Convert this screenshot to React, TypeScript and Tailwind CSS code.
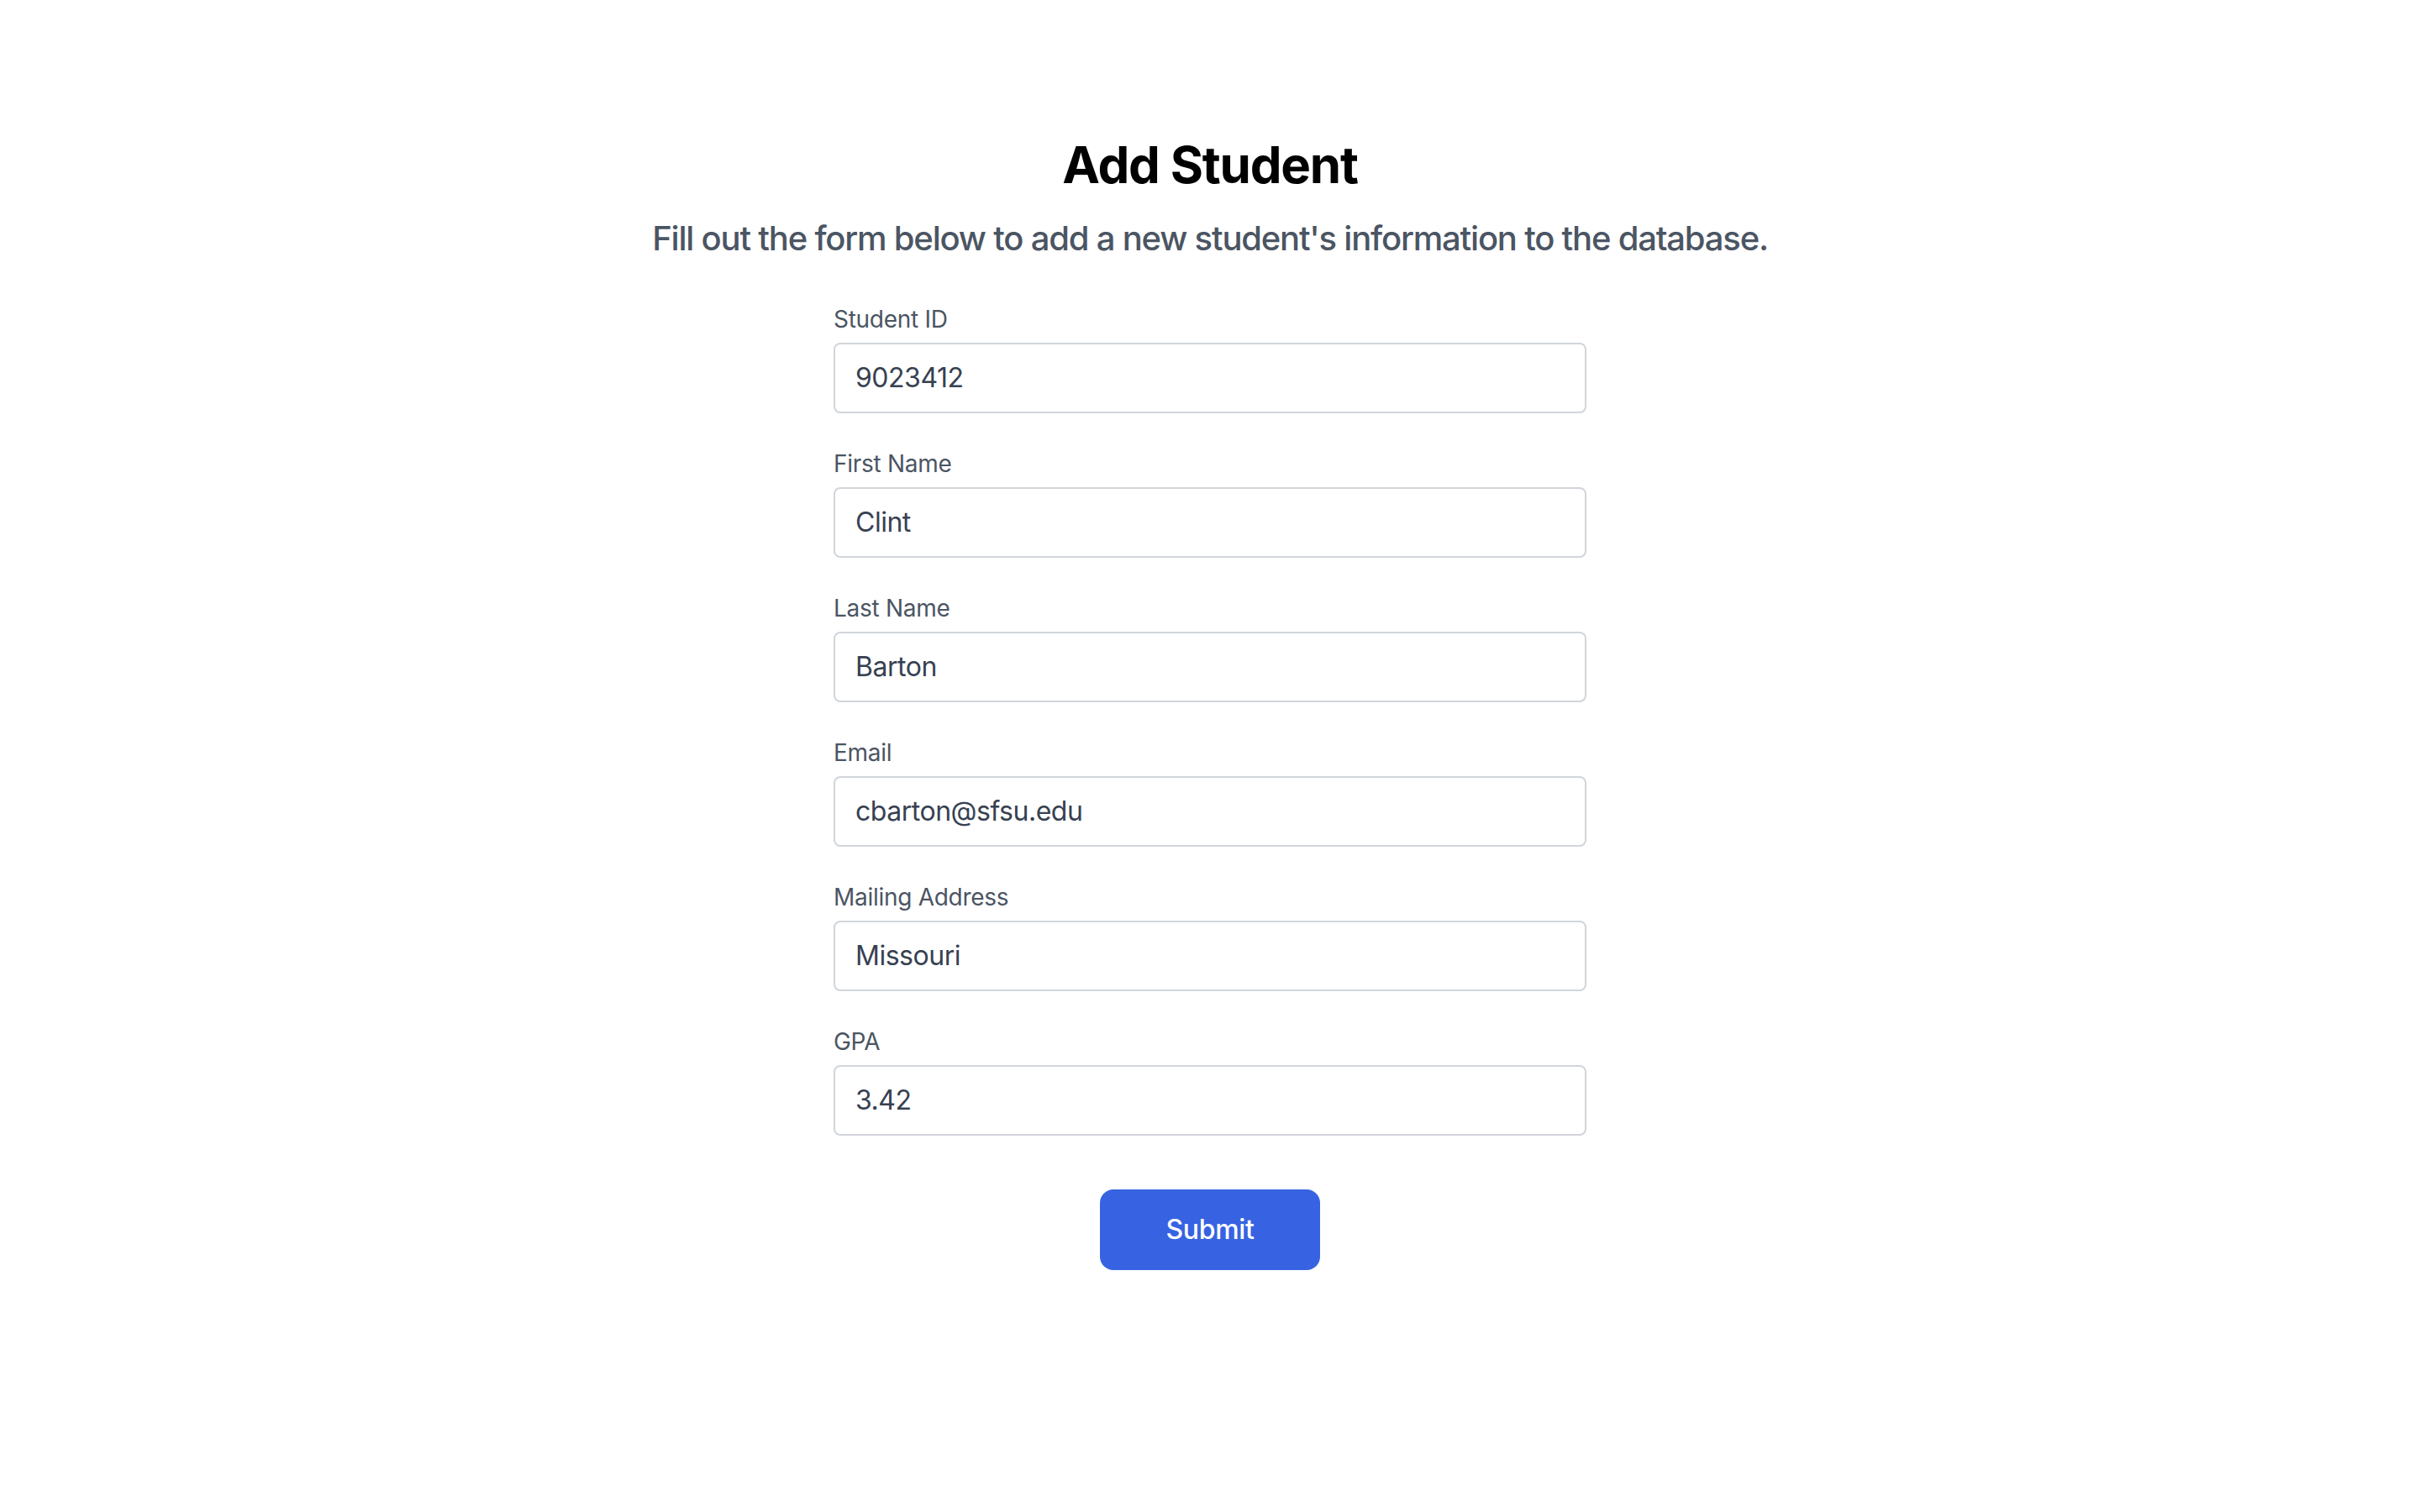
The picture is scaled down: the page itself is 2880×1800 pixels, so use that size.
import React from 'react';

const fields: { label: string; value: string }[] = [
    { label: 'Student ID', value: '9023412' },
    { label: 'First Name', value: 'Clint' },
    { label: 'Last Name', value: 'Barton' },
    { label: 'Email', value: 'cbarton@sfsu.edu' },
    { label: 'Mailing Address', value: 'Missouri' },
    { label: 'GPA', value: '3.42' },
];

const App: React.FC = () => {
    return (
        <div className="min-h-screen bg-white pt-[160px] font-['Inter',_sans-serif]">
            <div className="flex flex-col items-center">
                <h1 className="text-[60px] leading-[72px] font-bold tracking-[-0.02em] text-black">Add Student</h1>
                <p className="mt-6 text-[40px] leading-[56px] font-medium tracking-[-0.03em] text-[#4b5563]">
                    Fill out the form below to add a new student's information to the database.
                </p>
            </div>
            <form className="mx-auto mt-12 w-[896px]" onSubmit={(e) => e.preventDefault()}>
                <div className="flex flex-col gap-10">
                    {fields.map((f) => (
                        <div key={f.label} className="flex flex-col">
                            <label className="mb-2 text-[28px] leading-[40px] tracking-[-0.01em] text-[#4b5563]">{f.label}</label>
                            <input
                                type="text"
                                defaultValue={f.value}
                                className="rounded-lg border-2 border-[#d1d5db] px-6 py-4 text-[32px] leading-[48px] tracking-[-0.015em] text-[#374151] outline-none"
                            />
                        </div>
                    ))}
                </div>
                <div className="mt-16 flex justify-center">
                    <button
                        type="submit"
                        className="rounded-2xl bg-[#3763e2] px-[78px] py-6 text-[32px] leading-[48px] font-medium tracking-[-0.01em] text-white"
                    >
                        Submit
                    </button>
                </div>
            </form>
        </div>
    );
};

export default App;
